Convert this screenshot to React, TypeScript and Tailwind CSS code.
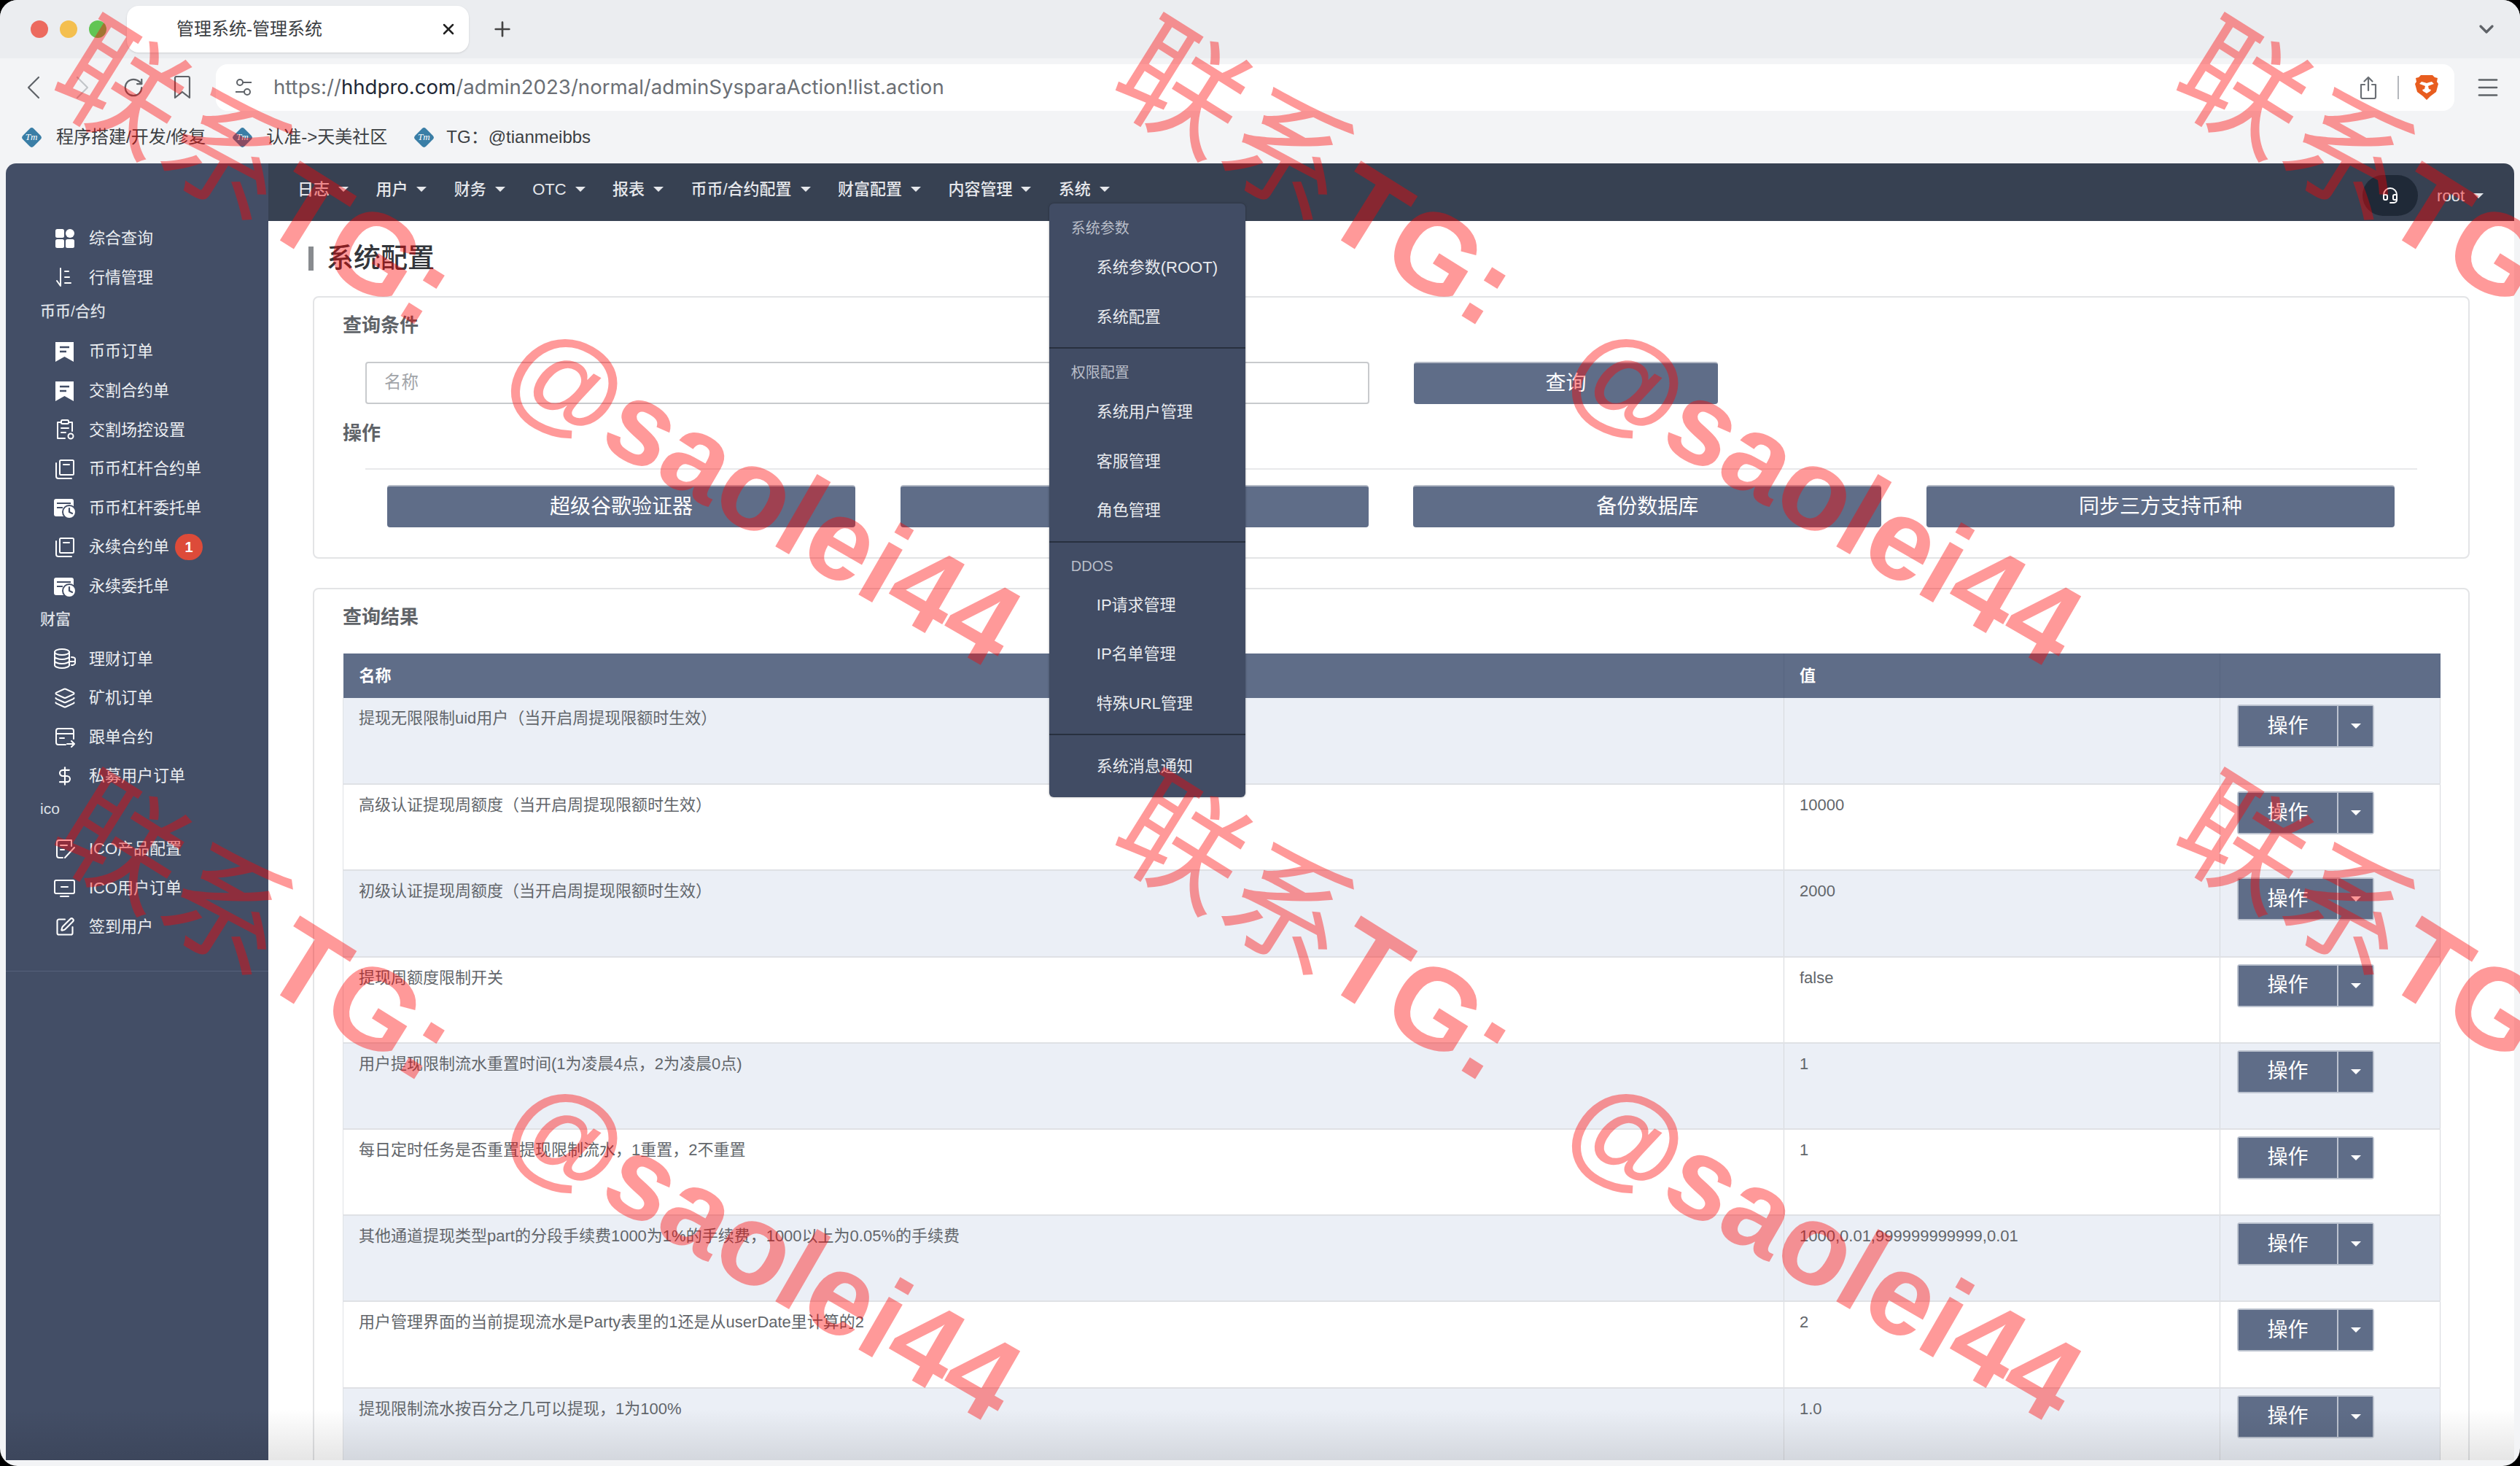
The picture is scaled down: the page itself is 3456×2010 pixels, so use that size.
import type { ReactNode } from 'react'
import {
  ChevronDown,
  DollarSign,
  Headset,
  Layers,
  Menu,
  Plus,
  RotateCw,
  SquarePen,
  X,
} from 'lucide-react'

const FONT = "font-['Liberation_Sans','Noto_Sans_CJK_SC',sans-serif]"

const Svg = ({ children }: { children: ReactNode }) => (
  <svg
    viewBox="0 0 30 30"
    className="h-[30px] w-[30px]"
    fill="none"
    stroke="#fff"
    strokeWidth="2"
    strokeLinecap="round"
    strokeLinejoin="round">
    {children}
  </svg>
)

const GridIcon = () => (
  <Svg>
    <g fill="#fff" stroke="none">
      <rect x="2" y="2" width="12" height="12" rx="2.5" />
      <circle cx="22" cy="8" r="6" />
      <rect x="2" y="16" width="12" height="12" rx="2.5" />
      <rect x="16" y="16" width="12" height="12" rx="2.5" />
    </g>
  </Svg>
)
const SortIcon = () => (
  <Svg>
    <path d="M9 3v24l-5-7M15 7h5M15 15h6M15 23h8" />
  </Svg>
)
const TicketIcon = () => (
  <Svg>
    <path d="M2 2h25v27l-12.500-7L2 29z" fill="#fff" stroke="none" />
    <path d="M8 9h13M8 15h9" stroke="#434e66" strokeWidth="2.500" strokeLinecap="butt" />
  </Svg>
)
const ClipIcon = () => (
  <Svg>
    <path d="M9 5H5v22h10M21 5h4v12" />
    <rect x="10" y="2" width="10" height="5" rx="1.500" />
    <path d="M10 13h10M10 19h6" />
    <circle cx="23" cy="24" r="3.500" />
  </Svg>
)
const CopyIcon = () => (
  <Svg>
    <rect x="8" y="3" width="19" height="20" rx="1.500" />
    <path d="M13 9h8M3 7v18a3 3 0 0 0 3 3h18" />
  </Svg>
)
const CardClockIcon = () => (
  <Svg>
    <rect x="0" y="3" width="27" height="24" rx="3" fill="#fff" stroke="none" />
    <path d="M4 9h19M4 15h8" stroke="#434e66" strokeLinecap="butt" />
    <circle cx="21" cy="21" r="9" fill="#fff" stroke="#434e66" strokeWidth="2" />
    <path d="M21 16v5l4 2" stroke="#434e66" strokeWidth="2.200" />
  </Svg>
)
const CoinsIcon = () => (
  <Svg>
    <ellipse cx="11" cy="6" rx="10" ry="4" />
    <path d="M1 6v18c0 2 4.500 4 10 4s10-2 10-4V6M1 12c0 2 4.500 4 10 4s10-2 10-4M1 18c0 2 4.500 4 10 4s10-2 10-4M24 13c3 0 5 1 5 2.500V21c0 2-3 3-5 3M22 19h7" />
  </Svg>
)
const CardArrowIcon = () => (
  <Svg>
    <path d="M16 26H6a3 3 0 0 1-3-3V7a3 3 0 0 1 3-3h18a3 3 0 0 1 3 3v11M3 11h24M8 17h6M18 25h10M24 21l4 4-4 4" />
  </Svg>
)
const DocPenIcon = () => (
  <Svg>
    <path d="M12 27H7a3 3 0 0 1-3-3V6a3 3 0 0 1 3-3h17v8M9 10h9M9 16h5M15 27l13-14" />
  </Svg>
)
const ScreenIcon = () => (
  <Svg>
    <rect x="1" y="5" width="27" height="18" rx="2" />
    <path d="M10 14h9M9 27h11" />
  </Svg>
)

const LucideWrap = ({ children }: { children: ReactNode }) => (
  <span className="flex h-[30px] w-[30px] items-center justify-center">{children}</span>
)

type SideItem = { label: string; icon: ReactNode; badge?: string }
type SideGroup = { title?: string; items: SideItem[] }

const SIDE_GROUPS: SideGroup[] = [
  {
    items: [
      { label: '综合查询', icon: <GridIcon /> },
      { label: '行情管理', icon: <SortIcon /> },
    ],
  },
  {
    title: '币币/合约',
    items: [
      { label: '币币订单', icon: <TicketIcon /> },
      { label: '交割合约单', icon: <TicketIcon /> },
      { label: '交割场控设置', icon: <ClipIcon /> },
      { label: '币币杠杆合约单', icon: <CopyIcon /> },
      { label: '币币杠杆委托单', icon: <CardClockIcon /> },
      { label: '永续合约单', icon: <CopyIcon />, badge: '1' },
      { label: '永续委托单', icon: <CardClockIcon /> },
    ],
  },
  {
    title: '财富',
    items: [
      { label: '理财订单', icon: <CoinsIcon /> },
      {
        label: '矿机订单',
        icon: (
          <LucideWrap>
            <Layers className="h-[30px] w-[30px] text-white" strokeWidth={1.6} />
          </LucideWrap>
        ),
      },
      { label: '跟单合约', icon: <CardArrowIcon /> },
      {
        label: '私募用户订单',
        icon: (
          <LucideWrap>
            <DollarSign className="h-[28px] w-[28px] text-white" strokeWidth={1.8} />
          </LucideWrap>
        ),
      },
    ],
  },
  {
    title: 'ico',
    items: [
      { label: 'ICO产品配置', icon: <DocPenIcon /> },
      { label: 'ICO用户订单', icon: <ScreenIcon /> },
      {
        label: '签到用户',
        icon: (
          <LucideWrap>
            <SquarePen className="h-[28px] w-[28px] text-white" strokeWidth={1.8} />
          </LucideWrap>
        ),
      },
    ],
  },
]

const NAV_ITEMS = ['日志', '用户', '财务', 'OTC', '报表', '币币/合约配置', '财富配置', '内容管理', '系统']

const MENU_GROUPS = [
  { title: '系统参数', pad: 'pt-[14px]', items: ['系统参数(ROOT)', '系统配置'] },
  { title: '权限配置', pad: 'pt-[13px]', items: ['系统用户管理', '客服管理', '角色管理'] },
  { title: 'DDOS', pad: 'pt-[12px]', items: ['IP请求管理', 'IP名单管理', '特殊URL管理'] },
  { pad: 'pt-[9px]', items: ['系统消息通知'] },
]

const ROWS = [
  { name: '提现无限限制uid用户（当开启周提现限额时生效）', value: '' },
  { name: '高级认证提现周额度（当开启周提现限额时生效）', value: '10000' },
  { name: '初级认证提现周额度（当开启周提现限额时生效）', value: '2000' },
  { name: '提现周额度限制开关', value: 'false' },
  { name: '用户提现限制流水重置时间(1为凌晨4点，2为凌晨0点)', value: '1' },
  { name: '每日定时任务是否重置提现限制流水，1重置，2不重置', value: '1' },
  { name: '其他通道提现类型part的分段手续费1000为1%的手续费，1000以上为0.05%的手续费', value: '1000,0.01,999999999999,0.01' },
  { name: '用户管理界面的当前提现流水是Party表里的1还是从userDate里计算的2', value: '2' },
  { name: '提现限制流水按百分之几可以提现，1为100%', value: '1.0' },
]

const WATERMARK_TILES = [
  { x: 0, y: 0 },
  { x: 1455, y: 0 },
  { x: 2910, y: 0 },
  { x: 0, y: 1035 },
  { x: 1455, y: 1035 },
  { x: 2910, y: 1035 },
  { x: 0, y: 2070 },
  { x: 1455, y: 2070 },
  { x: 2910, y: 2070 },
]

const Caret = ({ className = '' }: { className?: string }) => (
  <span className={`inline-block h-0 w-0 border-x-[7px] border-t-[7px] border-x-transparent ${className}`} />
)

const Favicon = () => (
  <span className="relative flex h-[30px] w-[30px] shrink-0 items-center justify-center">
    <span className="absolute h-[21px] w-[21px] rotate-45 rounded-[4px] bg-[#3a7ea6]" />
    <span className="relative font-['Liberation_Serif',serif] text-[13px] italic text-white">Tm</span>
  </span>
)

const BraveLogo = () => (
  <svg viewBox="0 0 32 36" className="h-[36px] w-[32px]">
    <path d="M8 1h16l3 3 4 1-1 5 2 3-3 11-8 6-5 5-5-5-8-6L0 13l2-3-1-5 4-1z" fill="#e85d1f" />
    <path
      d="M16 26l-5-3-1-2 3-1 1-4-5-2-3-1 3-3 4 1 3 1 3-1 4-1 3 3-3 1-5 2 1 4 3 1-1 2z"
      fill="#fff"
    />
  </svg>
)

const NavChevron = ({ color, flip = false }: { color: string; flip?: boolean }) => (
  <svg viewBox="0 0 28 40" className="h-[40px] w-[28px]" fill="none" stroke={color} strokeWidth="2.200" strokeLinecap="round" strokeLinejoin="round">
    <path d={flip ? 'M7 6l14 14L7 34' : 'M21 6L7 20l14 14'} />
  </svg>
)

const ChromeBar = () => (
  <>
    <div className="flex h-20 items-center bg-[#ebedf0] pl-[42px] pr-[30px]">
      <div className="flex w-[132px] gap-4">
        <span className="h-6 w-6 rounded-full bg-[#ec6a5e]" />
        <span className="h-6 w-6 rounded-full bg-[#f4bf4f]" />
        <span className="h-6 w-6 rounded-full bg-[#61c554]" />
      </div>
      <div className="flex h-16 w-[469px] items-center rounded-[16px] bg-white pl-[68px] pr-[16px] shadow-sm">
        <span className="flex-1 text-[24px] text-[#3c4043]">管理系统-管理系统</span>
        <X className="h-[24px] w-[24px] text-[#222]" strokeWidth={2.5} />
      </div>
      <Plus className="ml-[30px] h-[32px] w-[32px] text-[#444]" strokeWidth={2} />
      <div className="flex-1" />
      <ChevronDown className="h-[32px] w-[32px] text-[#5f6368]" strokeWidth={2.5} />
    </div>
    <div className="flex h-20 items-center bg-[#f3f4f6] pl-[32px] pr-[26px]">
      <NavChevron color="#5f6368" />
      <span className="ml-[39px]">
        <NavChevron color="#c2c5c9" flip />
      </span>
      <RotateCw className="ml-[41px] h-[30px] w-[30px] text-[#5f6368]" strokeWidth={1.8} />
      <svg viewBox="0 0 28 32" className="ml-[38px] h-[32px] w-[28px]" fill="none" stroke="#5f6368" strokeWidth="2.200" strokeLinejoin="round">
        <path d="M4 3a2 2 0 0 1 2-2h16a2 2 0 0 1 2 2v27l-10-8-10 8z" />
      </svg>
      <div className="ml-[32px] flex h-16 w-[3072px] items-center rounded-[16px] bg-white pl-[24px] pr-[22px]">
        <svg viewBox="0 0 28 28" className="h-[28px] w-[28px]" fill="none" stroke="#5f6368" strokeWidth="2">
          <circle cx="9" cy="7" r="4" />
          <path d="M13 7h12M3 20h12" />
          <circle cx="19" cy="20" r="4" />
        </svg>
        <span className="ml-[27px] flex-1 font-['Inter',sans-serif] text-[27.600px] text-[#6b6f75]">
          https://<span className="text-[#1f2937]">hhdpro.com</span>/admin2023/normal/adminSysparaAction!list.action
        </span>
        <svg viewBox="0 0 24 32" className="h-[32px] w-[24px]" fill="none" stroke="#6b6f75" strokeWidth="2.200" strokeLinecap="round" strokeLinejoin="round">
          <path d="M12 20V2M6.500 7.500L12 2l5.500 5.500M7 12H2v17a2 2 0 0 0 2 2h16a2 2 0 0 0 2-2V12h-5" />
        </svg>
        <span className="ml-[28px] h-[32px] w-[2px] bg-[#b4b7bc]" />
        <span className="ml-[22px]">
          <BraveLogo />
        </span>
      </div>
      <Menu className="ml-[28px] h-[36px] w-[36px] text-[#5f6368]" strokeWidth={1.8} />
    </div>
    <div className="flex h-16 items-center bg-[#f3f4f6] pb-[8px] pl-[28px] text-[24px] text-[#3c4043]">
      <Favicon />
      <span className="ml-[19px]">程序搭建/开发/修复</span>
      <span className="ml-[35px]">
        <Favicon />
      </span>
      <span className="ml-[18px]">认准-&gt;天美社区</span>
      <span className="ml-[35px]">
        <Favicon />
      </span>
      <span className="ml-[16px]">TG：@tianmeibbs</span>
    </div>
  </>
)

const Sidebar = () => (
  <aside className="w-[360px] shrink-0 bg-[#434e66] pt-[76px]">
    <div className="border-b border-[#56617a] pb-[33px]">
      {SIDE_GROUPS.map((group, i) => (
        <div key={i}>
          {group.title && (
            <div className={`flex items-center pl-[47px] text-[21px] font-medium text-[#dde0e6] ${i === 1 ? 'h-[48px] pb-[8px]' : 'h-[46px] pb-[10px]'}`}>
              {group.title}
            </div>
          )}
          {group.items.map((item) => (
            <div key={item.label} className="flex h-[53.600px] items-center pl-[66px]">
              {item.icon}
              <span className="ml-[18px] text-[22px] text-[#eceef2]">{item.label}</span>
              {item.badge && (
                <span className="ml-[8px] flex h-[36px] w-[38px] items-center justify-center rounded-full bg-[#dd4b39] text-[20px] font-bold text-white">
                  {item.badge}
                </span>
              )}
            </div>
          ))}
        </div>
      ))}
    </div>
  </aside>
)

const SystemMenu = () => (
  <div className="absolute left-[-13px] top-[55px] z-10 w-[269px] rounded-[6px] bg-[#414c64] shadow-[0_0_3px_rgba(0,0,0,0.35)]">
    {MENU_GROUPS.map((group, i) => (
      <div key={i} className={`pb-[8px] ${i > 0 ? 'border-t-2 border-[#28303f]' : ''} ${group.pad}`}>
        {group.title && (
          <div className="flex h-[40px] items-center pl-[30px] text-[20px] font-normal text-[#b9bec9]">
            {group.title}
          </div>
        )}
        {group.items.map((item) => (
          <div key={item} className="flex h-[67.500px] items-center pl-[65px] text-[22px] font-normal text-[#e8eaee]">
            {item}
          </div>
        ))}
      </div>
    ))}
  </div>
)

const TopNav = () => (
  <header className="flex h-[79px] shrink-0 items-center justify-between bg-[#374152] pl-[40px] pr-[42px] text-[#e5e7eb]">
    <nav className="flex h-full items-center gap-[37.400px]">
      {NAV_ITEMS.map((item) => (
        <div key={item} className="relative flex h-full items-center gap-[12px] pb-[8px] text-[22px] font-medium">
          {item}
          <Caret className="border-t-[#e5e7eb]" />
          {item === '系统' && <SystemMenu />}
        </div>
      ))}
    </nav>
    <div className="mt-[9px] flex items-center">
      <span className="flex h-[56px] w-[76px] items-center justify-center rounded-full bg-[#1f2937]">
        <Headset className="h-[24px] w-[24px] text-white" strokeWidth={2} />
      </span>
      <span className="ml-[26px] text-[22px] font-medium">root</span>
      <Caret className="ml-[12px] border-t-[#e5e7eb]" />
    </div>
  </header>
)

const SlateButton = ({ children, className = '' }: { children?: ReactNode; className?: string }) => (
  <button className={`flex h-[58px] items-center justify-center rounded-[4px] border-t-2 border-[#b4bac6] bg-[#5f6d88] text-[28px] text-white ${className}`}>
    {children}
  </button>
)

const QueryCard = () => (
  <section className="rounded-[8px] border-2 border-[#e3e4e6] pb-[41px] pl-[39px] pt-[18px]">
    <h3 className="flex h-[40px] items-center text-[26px] font-semibold text-[#5f6368]">查询条件</h3>
    <div className="ml-[31px] mt-[30px] flex">
      <div className="flex h-[58px] w-[1377px] items-center rounded-[4px] border-2 border-[#c8cacd] pl-[24px] text-[23.500px] text-[#a2a5a9]">
        名称
      </div>
      <SlateButton className="ml-[61px] w-[417px]">查询</SlateButton>
    </div>
    <h3 className="mt-[20px] flex h-[40px] items-center text-[26px] font-semibold text-[#5f6368]">操作</h3>
    <div className="ml-[31px] mt-[28px] h-[2px] w-[2814px] bg-[#e8e9eb]" />
    <div className="ml-[61px] mt-[21px] grid w-[2753px] grid-cols-4 gap-[61.500px]">
      <SlateButton>超级谷歌验证器</SlateButton>
      <SlateButton />
      <SlateButton>备份数据库</SlateButton>
      <SlateButton>同步三方支持币种</SlateButton>
    </div>
  </section>
)

const ActionButton = () => (
  <div className="flex h-[59px] w-[188px] rounded-[4px] border-2 border-[#bcc3cf] text-white">
    <span className="flex w-[137px] items-center justify-center border-r-2 border-[#bcc3cf] bg-[#5f6d88] text-[28px]">操作</span>
    <span className="flex flex-1 items-center justify-center bg-[#5f6d88]">
      <Caret className="border-t-white" />
    </span>
  </div>
)

const ResultTable = () => (
  <table className="mt-[30px] w-[2876px] table-fixed border-collapse text-[22px] text-[#62666b]">
    <colgroup>
      <col className="w-[1976px]" />
      <col className="w-[598px]" />
      <col className="w-[302px]" />
    </colgroup>
    <thead>
      <tr className="h-[61px] bg-[#5f6d88] text-left text-[22px] font-semibold text-white">
        <th className="px-[22px] font-semibold">名称</th>
        <th className="border-l border-[#566480] px-[21px] font-semibold">值</th>
        <th className="border-l border-[#566480]" />
      </tr>
    </thead>
    <tbody>
      {ROWS.map((row, i) => (
        <tr key={row.name} className={`h-[118.200px] border-b-2 border-[#dfe1e5] ${i % 2 === 0 ? 'bg-[#ebeff6]' : 'bg-white'}`}>
          <td className="border-l border-[#dfe1e5] px-[21px] pt-[13px] align-top leading-[30px]">{row.name}</td>
          <td className="border-l border-[#d6d8dc] px-[21px] pt-[13px] align-top leading-[30px]">{row.value}</td>
          <td className="border-x border-[#d6d8dc] pl-[23px] pt-[9px] align-top">
            <ActionButton />
          </td>
        </tr>
      ))}
    </tbody>
  </table>
)

const Watermark = () => (
  <div className={`pointer-events-none absolute inset-0 z-20 overflow-hidden text-[rgba(255,0,0,0.4)] ${FONT}`}>
    {WATERMARK_TILES.map((tile) => (
      <div key={`${tile.x}-${tile.y}`} className="absolute left-0 top-0" style={{ transform: `translate(${tile.x}px, ${tile.y}px)` }}>
        <span className="absolute left-[93px] top-[-9px] origin-left rotate-[32deg] whitespace-nowrap text-[172px] leading-none">
          联系<span className="text-[156px] font-bold">TG:</span>
        </span>
        <span className="absolute left-[712px] top-[404px] origin-left rotate-[30deg] whitespace-nowrap text-[158px] font-bold leading-none">
          @saolei44
        </span>
      </div>
    ))}
  </div>
)

export default function App() {
  return (
    <div className={`relative h-[2010px] w-[3456px] overflow-hidden bg-black ${FONT}`}>
      <div className="flex h-full flex-col overflow-hidden rounded-[24px] bg-[#f3f4f6]">
        <ChromeBar />
        <main className="relative mx-2 flex h-[1778px] overflow-hidden rounded-t-[14px] bg-white">
          <Sidebar />
          <div className="flex min-w-0 flex-1 flex-col">
            <TopNav />
            <div className="pl-[55px]">
              <div className="flex h-[103px] items-center">
                <span className="h-[33px] w-[7px] bg-[#888b8f]" />
                <h1 className="ml-[18px] text-[37px] font-medium text-[#33363b]">系统配置</h1>
              </div>
              <div className="ml-[6px] flex w-[2958px] flex-col gap-[40px]">
                <QueryCard />
                <section className="rounded-[8px] border-2 border-[#e3e4e6] pl-[39px] pt-[18px]">
                  <h3 className="flex h-[40px] items-center text-[26px] font-semibold text-[#5f6368]">查询结果</h3>
                  <ResultTable />
                </section>
              </div>
            </div>
          </div>
          <div className="pointer-events-none absolute inset-x-0 bottom-0 h-[70px] bg-gradient-to-b from-transparent to-black/10" />
        </main>
      </div>
      <Watermark />
    </div>
  )
}
